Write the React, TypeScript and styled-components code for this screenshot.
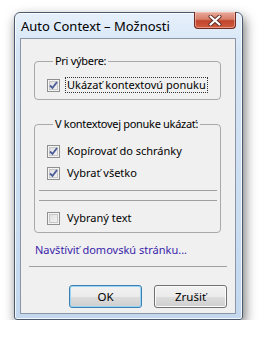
import React from 'react';
import styled, { createGlobalStyle } from 'styled-components';

const GlobalStyle = createGlobalStyle`
  body {
    margin: 0;
    background: #ffffff;
    font-family: "Noto Sans", "Open Sans", sans-serif;
    font-size: 11px;
    color: #000;
  }
`;

const Page = styled.div`
  padding: 12px 0 0 14px;
`;

const Window = styled.div`
  width: 229px;
  height: 308px;
  box-sizing: border-box;
  border: 1px solid #4a5a6e;
  border-radius: 6px 6px 3px 3px;
  background: linear-gradient(180deg, #e6f0fb 0%, #d6e5f5 12%, #c3d8ee 100%);
  box-shadow: 2px 5px 12px rgba(0, 0, 0, 0.55), inset 0 0 0 1px rgba(255, 255, 255, 0.8);
  padding: 0 6px 5px 5px;
  display: flex;
  flex-direction: column;
  white-space: nowrap;
`;

const TitleBar = styled.div`
  height: 25px;
  display: flex;
  justify-content: space-between;
  align-items: center;
`;

const Title = styled.span`
  padding-left: 1px;
  padding-top: 1px;
  font-size: 13px;
  color: #000;
`;

const CloseButton = styled.div`
  align-self: flex-start;
  margin-top: -1px;
  width: 42px;
  height: 17px;
  box-sizing: border-box;
  border: 1px solid #6e2b22;
  border-top: none;
  border-radius: 0 0 4px 4px;
  background: linear-gradient(180deg, #e8ab9c 0%, #d87e6a 45%, #c1442c 55%, #cf5d3f 100%);
  box-shadow: inset 0 0 0 1px rgba(255, 210, 200, 0.5);
  display: flex;
  align-items: center;
  justify-content: center;
`;

const Client = styled.div`
  flex: 1;
  background: #f0f0f0;
  border: 1px solid #8a96a5;
  display: flex;
  flex-direction: column;
`;

const Body = styled.div`
  padding: 14px 14px 0 13px;
  display: flex;
  flex-direction: column;
`;

const Group = styled.fieldset<{ $top: number; $bottom: number }>`
  margin: 0 0 ${({ $bottom }) => $bottom}px 0;
  padding: ${({ $top }) => $top}px 3px 6px 12px;
  border: 1px solid #a9a9a9;
  border-radius: 4px;
  display: flex;
  flex-direction: column;
  gap: 6px;
  min-width: 0;
`;

const Legend = styled.legend`
  margin-left: 6px;
  padding: 0 2px;
  line-height: 16px;
  letter-spacing: -0.3px;
`;

const Row = styled.label`
  display: flex;
  align-items: center;
  height: 16px;
  gap: 6px;
`;

const LabelText = styled.span<{ $focused?: boolean }>`
  line-height: 14px;
  padding: 0 1px;
  outline: ${({ $focused }) => ($focused ? '1px dotted #333' : 'none')};
`;

const Box = styled.span`
  width: 13px;
  height: 13px;
  box-sizing: border-box;
  border: 1px solid #8f8f8f;
  background: linear-gradient(135deg, #dcdcdc 0%, #f6f6f6 100%);
  box-shadow: inset 0 0 0 1px #f4f4f4, inset 0 0 0 2px #c8c8c8;
  display: flex;
  align-items: center;
  justify-content: center;
  flex-shrink: 0;
`;

const Separator = styled.div<{ $margin: string }>`
  height: 1px;
  background: #a0a0a0;
  margin: ${({ $margin }) => $margin};
`;

const Link = styled.a`
  margin-left: 1px;
  line-height: 16px;
  color: #3a1eaa;
  text-decoration: none;
`;

const Footer = styled.div`
  padding: 0 8px 5px 8px;
  display: flex;
  flex-direction: column;
  margin-top: auto;
`;

const Buttons = styled.div`
  display: flex;
  justify-content: flex-end;
  gap: 12px;
  margin-top: 18px;
`;

const Button = styled.button<{ $default?: boolean }>`
  width: 73px;
  height: 23px;
  box-sizing: border-box;
  font-family: inherit;
  font-size: 11.5px;
  color: #000;
  border: 1px solid ${({ $default }) => ($default ? '#3c7fb1' : '#707070')};
  border-radius: 3px;
  background: linear-gradient(180deg, #f2f2f2 0%, #ebebeb 50%, #dddddd 51%, #cfcfcf 100%);
  box-shadow: inset 0 0 0 1px ${({ $default }) => ($default ? '#98d5f4' : '#fcfcfc')};
  padding: 0;
`;

const Check = () => (
  <svg width="9" height="9" viewBox="0 0 9 9">
    <path d="M1 4.5 L3.5 7 L8 1" fill="none" stroke="#4a5c99" strokeWidth="1.8" />
  </svg>
);

const CloseGlyph = () => (
  <svg width="14" height="11" viewBox="0 0 14 11">
    <path d="M2.5 1.5 L11.5 9.5 M11.5 1.5 L2.5 9.5" stroke="#5a2a22" strokeWidth="4" strokeLinecap="round" />
    <path d="M2.5 1.5 L11.5 9.5 M11.5 1.5 L2.5 9.5" stroke="#ffffff" strokeWidth="2.2" strokeLinecap="round" />
  </svg>
);

const CheckRow: React.FC<{ checked: boolean; label: string; focused?: boolean }> = ({ checked, label, focused }) => (
  <Row>
    <Box>{checked && <Check />}</Box>
    <LabelText $focused={focused}>{label}</LabelText>
  </Row>
);

const App: React.FC = () => {
  return (
    <>
      <GlobalStyle />
      <Page>
        <Window>
          <TitleBar>
            <Title>Auto Context – Možnosti</Title>
            <CloseButton>
              <CloseGlyph />
            </CloseButton>
          </TitleBar>
          <Client>
            <Body>
              <Group $top={8} $bottom={16}>
                <Legend>Pri výbere:</Legend>
                <CheckRow checked label="Ukázať kontextovú ponuku" focused />
              </Group>
              <Group $top={11} $bottom={9}>
                <Legend>V kontextovej ponuke ukázať:</Legend>
                <CheckRow checked label="Kopírovať do schránky" />
                <CheckRow checked label="Vybrať všetko" />
                <Separator $margin="3px 0 0 -8px" />
                <Separator $margin="3px 0 3px -8px" />
                <CheckRow checked={false} label="Vybraný text" />
              </Group>
              <Link href="#">Navštíviť domovskú stránku...</Link>
            </Body>
            <Footer>
              <Separator $margin="0" />
              <Buttons>
                <Button $default>OK</Button>
                <Button>Zrušiť</Button>
              </Buttons>
            </Footer>
          </Client>
        </Window>
      </Page>
    </>
  );
};

export default App;
